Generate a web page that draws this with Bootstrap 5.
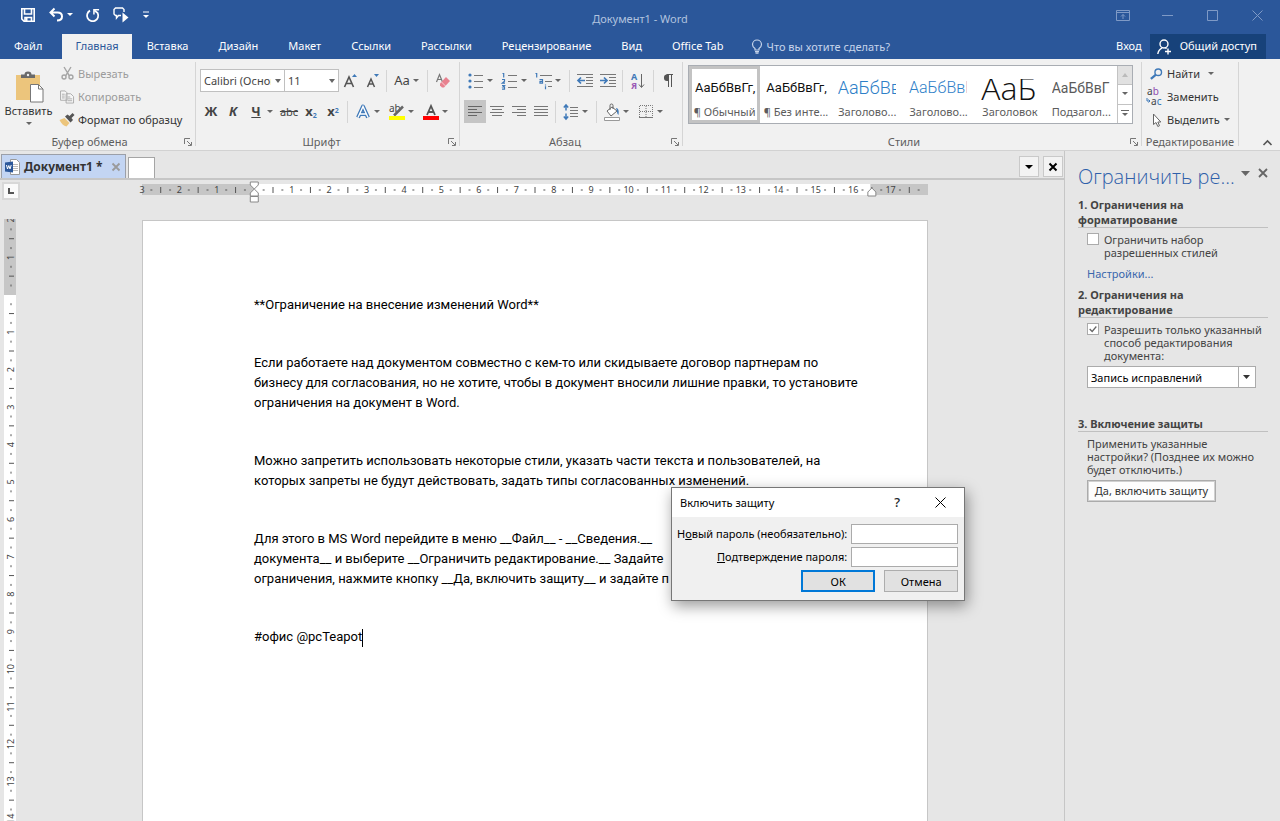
<!DOCTYPE html>
<html lang="ru">
<head>
<meta charset="utf-8">
<meta name="viewport" content="width=device-width, initial-scale=1">
<title>Документ1 - Word</title>
<link href="https://cdn.jsdelivr.net/npm/bootstrap@5.3.0/dist/css/bootstrap.min.css" rel="stylesheet">
<style>
  :root { --word: #2b579a; --ink: #444; --line: #c6c6c6; --accent: #3f79b8; }
  body { font: 11px/15px "Noto Sans", "Open Sans", sans-serif; color: var(--ink); background: #e6e6e6; }
  svg { display: block; flex: none; overflow: visible; }
  button, input, select, label, h1, h2, a { font: inherit; color: inherit; }
  select { appearance: none; outline: 0; cursor: default; }

  /* title bar and ribbon tabs */
  .app-head { background: var(--word); color: #fff; }
  .title-row { height: 34px; padding-left: 20px; }
  .title-row .btn { color: #fff; padding: 0; border: 0; }
  .quick { gap: 13px; }
  .doc-name { left: 0; right: 0; top: 11px; color: #b1c3df; pointer-events: none; }
  .title-row .win-btn { width: 45px; color: #7f9ac6; }
  .ribbon-tabs { height: 25px; --bs-nav-tabs-border-width: 0; }
  .ribbon-tabs .nav-link { color: #fff; padding: 0 15px; line-height: 24px; height: 25px; border: 0; border-radius: 0; font-size: 11px; }
  .ribbon-tabs .nav-link.active { background: #f1f1f1; color: var(--word); }
  .ribbon-tabs .file-tab { padding: 0 20px 0 14px; }
  .ribbon-tabs .home-tab { padding: 0 13px; margin-right: 0; }
  .ribbon-tabs .tell-me { color: #c6d4ea; padding-left: 12px; }
  .share { background: #17427a; color: #fff; border: 0; border-radius: 0; height: 25px; padding: 0 9px 0 7px; margin-right: 14px; font-size: 11px; }

  /* ribbon */
  .ribbon { background: #f1f1f1; border-bottom: 1px solid #d2d2d2; height: 92px; padding-top: 3px; }
  .group { height: 84px; border-right: 1px solid #d5d5d5; position: relative; flex: none; }
  .g-clip { width: 196px; } .g-font { width: 264px; padding-left: 4px; }
  .g-para { width: 223px; padding-left: 4px; } .g-edit { width: 97px; }
  .g-styles { flex: 1; min-width: 0; }
  .g-foot { margin: auto 0 -3px; height: 15px; line-height: 15px; color: #5e5e5e; }
  .g-foot svg { position: absolute; right: 3px; bottom: 0; }
  .tools { height: 23px; margin-top: 7px; }
  .tools + .tools { margin-top: 8px; }
  .rb { width: 22px; height: 23px; padding: 0; border: 0; border-radius: 0; color: var(--ink); display: flex; align-items: center; justify-content: center; font-size: 13px; line-height: 15px; }
  .rb.wide { width: 24px; }
  .rb.split { width: 34px; justify-content: start; padding-left: 2px; gap: 1px; }
  .rb.split > :first-child { width: 20px; text-align: center; }
  .rb.on { background: #c5c5c5; }
  .rb.strike { font-size: 11px; text-decoration: line-through; }
  .rb sub, .rb sup { color: var(--accent); font-size: 7px; }
  .vr-line { width: 1px; height: 22px; background: #d5d5d5; margin: 0 3px; flex: none; }
  .box-select { height: 23px; border: 1px solid #c0c0c0; border-radius: 0; background: #fff no-repeat right 3px center url("data:image/svg+xml,%3Csvg xmlns='http://www.w3.org/2000/svg' width='6' height='4'%3E%3Cpath d='M0 0h6L3 4z' fill='%23666'/%3E%3C/svg%3E"); padding: 0 13px 0 3px; }
  .f-name { width: 85px; } .f-size { width: 55px; margin-left: -1px; }
  .paste { width: 57px; padding: 4px 0 0; border: 0; font-size: 11px; line-height: 15px; color: #333; }
  .txt-btn { border: 0; padding: 0; height: 23px; font-size: 11px; line-height: 15px; color: #333; display: flex; align-items: center; gap: 4px; white-space: nowrap; }
  .txt-btn:disabled { color: #9c9c9c; border: 0; opacity: 1; }

  /* style gallery */
  .gallery { height: 59px; border: 1px solid #a9adb3; background: #fff; margin: 3px 8px 0 5px; }
  .style-item { flex: 1 1 0; min-width: 0; border: 0; border-radius: 0; padding: 5px 3px 0; color: #111; line-height: 15px; overflow: hidden; }
  .style-item.on { box-shadow: inset 0 0 0 3px #c3c3c3; }
  .style-item .sample { display: block; height: 26px; line-height: 24px; overflow: hidden; white-space: nowrap; text-align: left; margin: 0 0 0 3px; font-family: Roboto, "Noto Sans", sans-serif; font-size: 13px; }
  .style-item .cap { display: block; font-size: 11px; color: #5c5c5c; white-space: nowrap; margin-top: 2px; }
  .style-item .s18 { font-size: 18px; font-weight: 300; color: #2e80c8; margin-right: 4px; }
  .style-item .s16 { font-size: 16px; font-weight: 300; color: #2e80c8; margin-right: 4px; }
  .style-item .s32 { font-family: "Open Sans", sans-serif; font-size: 32px; font-weight: 300; height: 23px; line-height: 17px; margin: 3px 4px 0; }
  .style-item .sub { color: #5a5a5a; font-size: 14px; }
  .scroll-btn { flex: 1; width: 15px; border: 0; border-left: 1px solid #c3c3c3; background: #fff; padding: 0; display: flex; align-items: center; justify-content: center; }
  .scroll-btn + .scroll-btn { border-top: 1px solid #c3c3c3; }
  .scroll-btn:disabled { background: #e1e1e1; }

  /* document tabs */
  .doc-tabs { height: 29px; border-bottom: 2px solid #c6c6c6; padding: 0 1px; }
  .doc-tab { width: 125px; height: 24px; background: #c3d5f3; border: 1px solid #9b9fa8; border-bottom: 0; padding: 0 5px 0 3px; font-size: 12px; color: #333; }
  .new-tab { width: 27px; height: 21px; background: #fff; border: 1px solid #a5a5a5; border-bottom: 0; border-radius: 0; padding: 0; margin-left: 2px; }
  .strip-btn { width: 20px; height: 21px; background: #f3f3f3; border: 1px solid #c9c9c9; border-radius: 0; padding: 0; display: flex; align-items: center; justify-content: center; color: #000; }

  /* workspace */
  .side { width: 20px; }
  .tab-kind { width: 18px; height: 18px; background: #fafafa; border: 2px solid #d8d8d8; margin: 2px 0 0 2px; padding: 0; display: flex; align-items: center; justify-content: center; }
  .v-ruler { width: 12px; margin: 19px 0 0 4px; flex: 1; background: linear-gradient(#c6c6c6 76px, #fff 76px); overflow: hidden; }
  .canvas { padding-right: 14px; overflow: hidden; }
  .sheet-col { width: 100%; max-width: 786px; }
  .h-ruler { height: 11px; margin: 4px 0 25px; background: #fff; }
  .ruler-text { font-size: 9px; fill: #444; text-anchor: middle; }
  .sheet { background: #fff; border: 1px solid #c6c6c6; border-bottom: 0; padding: 74px 50px 0 111px; font: 13px/20px Roboto, "Noto Sans", sans-serif; color: #000; }
  .sheet p { margin: 0 0 38px; white-space: nowrap; }
  .caret { display: inline-block; width: 1px; height: 18px; background: #000; vertical-align: middle; }

  /* task pane */
  .pane { width: 216px; border-left: 1px solid #c6c6c6; padding: 13px 12px 0 13px; line-height: 13px; }
  .pane h1 { font-size: 20px; line-height: 26px; color: #2f60aa; margin: 0; font-family: "Open Sans", "Noto Sans", sans-serif; font-weight: 300; white-space: nowrap; }
  .pane h2 { font-weight: 700; line-height: 15px; border-bottom: 1px solid #c0c0c0; margin: 7px 0 5px; }
  .pane .inner { padding-left: 9px; }
  .pane .pane-link { color: #3a67ad; }
  .pane .check-row { display: flex; gap: 5px; }
  .pane .form-check-input { width: 12px; height: 12px; margin: 0; border: 1px solid #ababab; border-radius: 0; background-color: #fff; flex: none; opacity: 1; }
  .pane .form-check-input:checked { background-image: url("data:image/svg+xml,%3Csvg xmlns='http://www.w3.org/2000/svg' viewBox='0 0 12 12'%3E%3Cpath d='M2 6l3 3 5-6' fill='none' stroke='%23666' stroke-width='1.5'/%3E%3C/svg%3E"); }
  .mode-select { width: 169px; height: 22px; border: 1px solid #ababab; border-radius: 0; padding: 0 18px 0 3px; color: #000; background: #fff no-repeat right center url("data:image/svg+xml,%3Csvg xmlns='http://www.w3.org/2000/svg' width='17' height='20'%3E%3Cpath d='M.5 0v20' stroke='%23ababab'/%3E%3Cpath d='M5 8h7l-3.500 4z' fill='%23333'/%3E%3C/svg%3E"); }
  .apply { width: 129px; height: 22px; background: #fdfdfd; border: 1px solid #ababab; box-shadow: inset 0 0 0 1px #d0d0d0; border-radius: 0; padding: 0; font-size: 11px; color: #333; }

  /* dialog */
  .dlg { left: 671px; top: 487px; width: 294px; border: 1px solid #777; background: #f0f0f0; color: #000; box-shadow: 2px 5px 14px rgba(0,0,0,.4); }
  .dlg-head { height: 29px; background: #fff; padding: 0 18px 0 8px; }
  .dlg-head .help { font-size: 13px; line-height: 15px; font-weight: 500; margin-right: 35px; }
  .dlg-body { padding: 7px 7px 8px 5px; display: grid; grid-template-columns: 1fr 107px; gap: 3px 4px; }
  .dlg-body label { text-align: right; line-height: 20px; white-space: nowrap; }
  .dlg-acts { grid-column: 1 / -1; gap: 9px; }
  .dlg .form-control { height: 20px; border: 1px solid #ababab; border-radius: 0; padding: 0 3px; }
  .dlg .dlg-btn { width: 74px; height: 22px; border: 1px solid #adadad; border-radius: 0; background: #e1e1e1; padding: 0; font-size: 11px; line-height: 15px; color: #000; }
  .dlg .dlg-btn.main { border: 2px solid #0078d7; }
</style>
</head>
<body class="vh-100 d-flex flex-column overflow-hidden position-relative">

<header class="app-head flex-shrink-0">
  <div class="title-row d-flex position-relative">
    <div class="quick d-flex align-items-center pb-1">
      <button class="btn" aria-label="Сохранить"><svg width="16" height="16" viewBox="0 0 16 16" fill="none" stroke="#fff" stroke-width="1.600"><path d="M1.800 1.800h12.400v12.400H4L1.800 12z"/><path d="M4.500 2v5h7V2M5 14v-3.500h6.500V14"/><path d="M6.500 11v3" stroke-width="2"/></svg></button>
      <button class="btn d-flex align-items-center gap-1" aria-label="Отменить"><svg width="14" height="16" viewBox="0 0 14 16" fill="none" stroke="#fff" stroke-width="2"><path d="M5.500 1.500 1.500 5.500l4 4M2 5.500h6.500c3 0 4.500 1.500 4.500 4s-2 4-5 4"/></svg><svg width="6" height="4"><path d="M0 0h6L3 3z" fill="#fff"/></svg></button>
      <button class="btn" aria-label="Повторить"><svg width="14" height="15" viewBox="0 0 15 16" fill="none" stroke="#fff" stroke-width="1.900"><path d="M4.300 2.800A6 6 0 1 0 12.500 5.500L9 2.500"/><path d="M8.500 7V1.800H14" stroke-width="1.600"/></svg></button>
      <button class="btn" aria-label="Прочитать вслух"><svg width="16" height="16" viewBox="0 0 16 16"><path d="M8 8.500H5.500L3.500 11V8.500H2.500L1 7V2.500L2.500 1h7L11 2.500V5" fill="none" stroke="#fff" stroke-width="1.400"/><path d="M9.500 5.500v10l6-5z" fill="#fff"/></svg></button>
      <button class="btn" aria-label="Настройка панели"><svg width="8" height="8"><path d="M1 1h6" stroke="#fff"/><path d="M1 4h6L4 7z" fill="#fff"/></svg></button>
    </div>
    <div class="doc-name position-absolute text-center">Документ1 - Word</div>
    <div class="ms-auto d-flex align-items-center pb-1">
      <button class="btn win-btn" aria-label="Параметры ленты"><svg class="mx-auto" width="14" height="11" viewBox="0 0 14 11" fill="none" stroke="currentColor"><path d="M.5.5h13v10H.5zM.5 2.500h13M7 9V4.500M5 6.500l2-2 2 2"/></svg></button>
      <button class="btn win-btn" aria-label="Свернуть"><svg class="mx-auto" width="11" height="11"><path d="M0 5.500h11" stroke="currentColor"/></svg></button>
      <button class="btn win-btn" aria-label="Развернуть"><svg class="mx-auto" width="11" height="11"><path d="M.5.5h10v10H.5z" fill="none" stroke="currentColor"/></svg></button>
      <button class="btn win-btn" aria-label="Закрыть"><svg class="mx-auto" width="11" height="11"><path d="M.5.5l10 10M10.500.5l-10 10" stroke="currentColor"/></svg></button>
    </div>
  </div>
  <div class="d-flex">
    <nav class="nav nav-tabs ribbon-tabs flex-nowrap border-0">
      <a class="nav-link file-tab" href="#">Файл</a>
      <a class="nav-link home-tab active" href="#">Главная</a>
      <a class="nav-link" href="#">Вставка</a>
      <a class="nav-link" href="#">Дизайн</a>
      <a class="nav-link" href="#">Макет</a>
      <a class="nav-link" href="#">Ссылки</a>
      <a class="nav-link" href="#">Рассылки</a>
      <a class="nav-link" href="#">Рецензирование</a>
      <a class="nav-link" href="#">Вид</a>
      <a class="nav-link" href="#">Office Tab</a>
      <a class="nav-link tell-me d-flex align-items-center gap-1" href="#"><svg width="12" height="15" viewBox="0 0 12 15" fill="none" stroke="currentColor" stroke-width="1.200"><path d="M4 11V9.500C2.500 8.500 1.500 7.300 1.500 5.500a4.500 4.500 0 0 1 9 0c0 1.800-1 3-2.500 4V11zM4 12.600h4M4.500 14.200h3"/></svg>Что вы хотите сделать?</a>
    </nav>
    <div class="ms-auto d-flex ribbon-tabs">
      <a class="nav-link px-2" href="#">Вход</a>
      <button class="btn share d-flex align-items-center gap-1"><svg class="me-1" width="15" height="16" viewBox="0 0 15 16" fill="none" stroke="#fff" stroke-width="1.400"><circle cx="7" cy="5" r="4"/><path d="M.8 15c.4-3 2-5 4.400-6.200M8.500 9l1 .8M11 9.500v6M8 12.500h6"/></svg>Общий доступ</button>
    </div>
  </div>
</header>

<section class="ribbon d-flex flex-shrink-0" aria-label="Лента">
  <div class="group g-clip d-flex flex-column">
    <div class="d-flex">
      <button class="btn paste"><svg class="mx-auto" width="30" height="31" viewBox="0 0 30 31"><path d="M2 3h24v25H2z" fill="#ecc57c"/><path d="M7 6V2.500h3.500a3.500 3 0 0 1 7 0H21V6z" fill="#6a6a6a"/><circle cx="14" cy="3" r="1.200" fill="#f1f1f1"/><path d="M16.500 12.500h8l4.500 4.500v13H16.500z" fill="#fff" stroke="#777"/><path d="M24.500 12.500V17H29" fill="none" stroke="#777"/></svg>Вставить<svg class="mx-auto mt-1" width="6" height="4"><path d="M0 0h6L3 3z" fill="#666"/></svg></button>
      <div class="d-flex flex-column">
        <button class="btn txt-btn ms-1" disabled><svg width="13" height="15" viewBox="0 0 15 15" fill="none" stroke="#a5a5a5" stroke-width="1.600"><path d="M3.500 0l6 10M11.500 0l-6 10"/><circle cx="3.500" cy="11.500" r="2.300"/><circle cx="11.500" cy="11.500" r="2.300"/></svg>Вырезать</button>
        <button class="btn txt-btn" disabled><svg class="ms-1" width="13" height="14" viewBox="1 0 14 14" fill="#f6f6f6" stroke="#aaa"><path d="M.5.5h5l2 2v8h-7zM6.500 3.500h5l3 3v7h-8z"/><path d="M2 4h3M2 6h3M2 8h3M8 7h3M8 9h5M8 11h5"/></svg>Копировать</button>
        <button class="btn txt-btn"><svg class="ms-1" width="13" height="14" viewBox="2 0 12 14"><path d="M5 5l5 5-3 3.500C4 12.500 2 11 0 7z" fill="#ecc57c"/><path d="M5.500 3.500L8 1.500l2 1.500 3-3 2 2-3 3 1.500 2L11 9.500z" fill="#555"/></svg>Формат по образцу</button>
      </div>
    </div>
    <div class="g-foot text-center pe-3">Буфер обмена<svg width="8" height="8" viewBox="0 0 8 8" fill="none" stroke="#777"><path d="M.5 6V.5H6M3 3l4 4M7.500 4v3.500H4"/></svg></div>
  </div>

  <div class="group g-font d-flex flex-column">
    <div class="tools d-flex align-items-center">
      <select class="box-select f-name" aria-label="Шрифт"><option>Calibri (Основной текст)</option></select>
      <select class="box-select f-size" aria-label="Размер"><option>11</option></select>
      <button class="btn rb" aria-label="Увеличить размер"><svg width="15" height="16" viewBox="0 0 15 16"><path d="M1.500 14L6 4l4.500 10M3.200 10.500h5.600" fill="none" stroke="#555" stroke-width="1.600"/><path d="M9 4h5l-2.500-3z" fill="#3f79b8"/></svg></button>
      <button class="btn rb" aria-label="Уменьшить размер"><svg width="15" height="16" viewBox="0 0 15 16"><path d="M2.500 14L6 6l3.500 8M3.700 11h4.600" fill="none" stroke="#555" stroke-width="1.500"/><path d="M9 1h5l-2.500 3z" fill="#3f79b8"/></svg></button>
      <span class="vr-line"></span>
      <button class="btn rb split" aria-label="Регистр"><span>Aa</span><svg width="6" height="4"><path d="M0 0h6L3 3z" fill="#666"/></svg></button>
      <span class="vr-line"></span>
      <button class="btn rb wide" aria-label="Очистить формат"><svg width="16" height="16" viewBox="0 0 16 16"><path d="M1.500 9L4.500 1.500 7.500 9M2.500 6.500h4" fill="none" stroke="#777" stroke-width="1.200"/><path d="M5 10.500L11 4l4 4-6 6.500H7l-2-2z" fill="#e8818f"/><path d="M6.500 9l4 4" stroke="#f6d0d5"/></svg></button>
    </div>
    <div class="tools d-flex align-items-center">
      <button class="btn rb fw-bold">Ж</button>
      <button class="btn rb fw-bold fst-italic">К</button>
      <button class="btn rb split"><span class="fw-bold text-decoration-underline">Ч</span><svg width="6" height="4"><path d="M0 0h6L3 3z" fill="#666"/></svg></button>
      <button class="btn rb strike">abc</button>
      <button class="btn rb fw-bold" aria-label="Подстрочный"><span>x<sub>2</sub></span></button>
      <button class="btn rb fw-bold" aria-label="Надстрочный"><span>x<sup>2</sup></span></button>
      <span class="vr-line"></span>
      <button class="btn rb split" aria-label="Эффекты"><svg width="20" height="16" viewBox="0 0 20 16"><path d="M5 13.500L10 2.500l5 11M6.500 10h7" fill="none" stroke="#3f79b8" stroke-width="4" stroke-linejoin="round"/><path d="M5 13.500L10 2.500l5 11M6.500 10h7" fill="none" stroke="#fff" stroke-width="1.400"/></svg><svg width="6" height="4"><path d="M0 0h6L3 3z" fill="#666"/></svg></button>
      <button class="btn rb split" aria-label="Цвет выделения"><svg width="20" height="18" viewBox="0 0 20 18"><text x="2" y="9" font-size="10" fill="#444">ab</text><path d="M7 12.500l9-9" stroke="#666" stroke-width="2.500"/><path d="M2 13h16v4H2z" fill="#ff0"/></svg><svg width="6" height="4"><path d="M0 0h6L3 3z" fill="#666"/></svg></button>
      <button class="btn rb split" aria-label="Цвет текста"><svg width="20" height="18" viewBox="0 0 20 18"><path d="M6 12L10 3l4 9M7.500 9h5" fill="none" stroke="#555" stroke-width="1.800"/><path d="M2 13h16v4H2z" fill="#f00"/></svg><svg width="6" height="4"><path d="M0 0h6L3 3z" fill="#666"/></svg></button>
    </div>
    <div class="g-foot text-center pe-3">Шрифт<svg width="8" height="8" viewBox="0 0 8 8" fill="none" stroke="#777"><path d="M.5 6V.5H6M3 3l4 4M7.500 4v3.500H4"/></svg></div>
  </div>

  <div class="group g-para d-flex flex-column">
    <div class="tools d-flex align-items-center">
      <button class="btn rb split" aria-label="Маркеры"><svg width="20" height="16" viewBox="0 0 20 16"><g fill="#3f79b8"><circle cx="4" cy="2" r="1.600"/><circle cx="4" cy="8" r="1.600"/><circle cx="4" cy="14" r="1.600"/></g><path d="M8 2.500h9M8 8.500h9M8 14.500h9" stroke="#777"/></svg><svg width="6" height="4"><path d="M0 0h6L3 3z" fill="#666"/></svg></button>
      <button class="btn rb split" aria-label="Нумерация"><svg width="20" height="18" viewBox="0 0 20 18"><g fill="none" stroke="#3f79b8" stroke-width="1.200"><path d="M2.500 1.500h1.200V5.500M2 7.500h2.500v1.800L2.300 11.200H5M2 13.500h2.500L3 15h1.500v2.200H2"/></g><path d="M8 3.500h9M8 9.500h9M8 15.500h9" stroke="#777"/></svg><svg width="6" height="4"><path d="M0 0h6L3 3z" fill="#666"/></svg></button>
      <button class="btn rb split" aria-label="Многоуровневый список"><svg width="20" height="18" viewBox="0 0 20 18"><g fill="none" stroke="#3f79b8" stroke-width="1.200"><path d="M1.500 1.500h1.200V5.500M5.500 7.500h3V11.200h-2.500V9.300h2.500M11.500 12.500v1M11.500 14.300v3"/></g><path d="M6 3.500h12M11 9.500h7M14 14.500h4" stroke="#777"/></svg><svg width="6" height="4"><path d="M0 0h6L3 3z" fill="#666"/></svg></button>
      <span class="vr-line"></span>
      <button class="btn rb wide" aria-label="Уменьшить отступ"><svg width="16" height="14" viewBox="0 0 16 14"><path d="M0 .5h16M9 3.500h7M9 6.500h7M9 9.500h7M0 12.500h16" stroke="#777"/><path d="M8 6.500H1.500M4 3.500l-3 3 3 3" fill="none" stroke="#3f79b8" stroke-width="1.700"/></svg></button>
      <button class="btn rb" aria-label="Увеличить отступ"><svg width="16" height="14" viewBox="0 0 16 14"><path d="M0 .5h16M9 3.500h7M9 6.500h7M9 9.500h7M0 12.500h16" stroke="#777"/><path d="M0 6.500h6.500M4 3.500l3 3-3 3" fill="none" stroke="#3f79b8" stroke-width="1.700"/></svg></button>
      <span class="vr-line"></span>
      <button class="btn rb wide" aria-label="Сортировка"><svg width="14" height="18" viewBox="0 0 14 18"><text x="0" y="8" font-size="9" font-weight="700" fill="#3f79b8">А</text><text x="0" y="17" font-size="9" font-weight="700" fill="#9b59b6">Я</text><path d="M10.500 2v13M8 12.500l2.500 3 2.500-3" fill="none" stroke="#666"/></svg></button>
      <span class="vr-line"></span>
      <button class="btn rb" aria-label="Знаки абзаца"><svg width="10" height="13" viewBox="0 0 10 13"><path d="M5 .5H4a3 3.200 0 0 0 0 6.500h1z" fill="#555"/><path d="M3.500.5H10M5.500.5V13M8.500.5V13" stroke="#555"/></svg></button>
    </div>
    <div class="tools d-flex align-items-center">
      <button class="btn rb on" aria-label="По левому краю"><svg width="14" height="11"><path d="M0 .5h14M0 3.500h9M0 6.500h14M0 9.500h9" stroke="#666"/></svg></button>
      <button class="btn rb" aria-label="По центру"><svg width="14" height="11"><path d="M0 .5h14M2 3.500h10M0 6.500h14M2 9.500h10" stroke="#777"/></svg></button>
      <button class="btn rb" aria-label="По правому краю"><svg width="14" height="11"><path d="M0 .5h14M5 3.500h9M0 6.500h14M5 9.500h9" stroke="#777"/></svg></button>
      <button class="btn rb" aria-label="По ширине"><svg width="14" height="11"><path d="M0 .5h14M0 3.500h14M0 6.500h14M0 9.500h14" stroke="#777"/></svg></button>
      <span class="vr-line"></span>
      <button class="btn rb split" aria-label="Интервал"><svg width="20" height="16" viewBox="0 0 20 16"><path d="M5 1.500v5M2.800 3.500L5 1l2.200 2.500M5 9.500v5M2.800 12.500L5 15l2.200-2.500" fill="none" stroke="#3f79b8" stroke-width="1.500"/><path d="M9 3.500h8M9 6.500h8M9 9.500h8M9 12.500h8" stroke="#777"/></svg><svg width="6" height="4"><path d="M0 0h6L3 3z" fill="#666"/></svg></button>
      <span class="vr-line"></span>
      <button class="btn rb split" aria-label="Заливка"><svg width="20" height="18" viewBox="0 0 20 18"><path d="M5 8l5-4 5 4-6 5z" fill="#fff" stroke="#666"/><path d="M8 7V2.500a1.500 1.500 0 0 1 3 0V6" fill="none" stroke="#666"/><path d="M14 5c3 0 3 4 2.500 7-1.500-1-1.500-3-1.500-4z" fill="#3f79b8"/><path d="M2.500 14.500h15v3h-15z" fill="#fff" stroke="#999"/></svg><svg width="6" height="4"><path d="M0 0h6L3 3z" fill="#666"/></svg></button>
      <button class="btn rb split" aria-label="Границы"><svg width="20" height="14" viewBox="0 0 20 14" fill="none" stroke="#777"><path d="M3.500 12V.5h13V12M10 1v11M4 6.500h12" stroke-dasharray="1 1"/><path d="M3 12.500h14"/></svg><svg width="6" height="4"><path d="M0 0h6L3 3z" fill="#666"/></svg></button>
    </div>
    <div class="g-foot text-center pe-3">Абзац<svg width="8" height="8" viewBox="0 0 8 8" fill="none" stroke="#777"><path d="M.5 6V.5H6M3 3l4 4M7.500 4v3.500H4"/></svg></div>
  </div>

  <div class="group g-styles d-flex flex-column">
    <div class="gallery d-flex">
      <button class="btn style-item on"><span class="sample">АаБбВвГг,</span><span class="cap">¶ Обычный</span></button>
      <button class="btn style-item"><span class="sample">АаБбВвГг,</span><span class="cap">¶ Без инте...</span></button>
      <button class="btn style-item"><span class="sample s18">АаБбВв</span><span class="cap">Заголово...</span></button>
      <button class="btn style-item"><span class="sample s16">АаБбВвГ</span><span class="cap">Заголово...</span></button>
      <button class="btn style-item"><span class="sample s32">АаБ</span><span class="cap">Заголовок</span></button>
      <button class="btn style-item"><span class="sample sub">АаБбВвГ</span><span class="cap">Подзагол...</span></button>
      <div class="d-flex flex-column">
        <button class="scroll-btn" disabled aria-label="Вверх"><svg width="6" height="4"><path d="M0 4h6L3 0z" fill="#bbb"/></svg></button>
        <button class="scroll-btn" aria-label="Вниз"><svg width="6" height="4"><path d="M0 0h6L3 3z" fill="#666"/></svg></button>
        <button class="scroll-btn" aria-label="Все стили"><svg width="8" height="7"><path d="M0 .5h8" stroke="#666"/><path d="M1 3h6L4 6z" fill="#666"/></svg></button>
      </div>
    </div>
    <div class="g-foot text-center pe-3">Стили<svg width="8" height="8" viewBox="0 0 8 8" fill="none" stroke="#777"><path d="M.5 6V.5H6M3 3l4 4M7.500 4v3.500H4"/></svg></div>
  </div>

  <div class="group g-edit d-flex flex-column">
    <div class="ps-1">
      <button class="btn txt-btn ms-1"><svg width="13" height="14" viewBox="0 0 15 14" fill="none" stroke="#3f79b8"><circle cx="9.500" cy="5" r="3.800" stroke-width="1.600"/><path d="M6.500 8L1 12.500" stroke-width="2.600"/></svg>Найти<svg class="ms-1" width="6" height="4"><path d="M0 0h6L3 3z" fill="#666"/></svg></button>
      <button class="btn txt-btn"><svg width="17" height="18" viewBox="0 0 17 18" font-size="10"><text x="1" y="7" fill="#444">a<tspan fill="#8e4bb0">b</tspan></text><text x="5" y="17" fill="#444">a<tspan fill="#2e74b5">c</tspan></text><path d="M1 10v3h3M2.500 11.500L4 13l-1.500 1.500" fill="none" stroke="#3f79b8"/></svg>Заменить</button>
      <button class="btn txt-btn ms-1"><svg width="13" height="14" viewBox="1 0 13 14"><path d="M4.500 1v10.500l2.500-2 1.800 4 1.700-.8-1.700-3.700h3z" fill="#fff" stroke="#666"/></svg>Выделить<svg width="6" height="4"><path d="M0 0h6L3 3z" fill="#666"/></svg></button>
    </div>
    <div class="g-foot text-center">Редактирование</div>
  </div>
  <button class="btn border-0 p-0 align-self-end mb-1 ms-4 me-2" aria-label="Свернуть ленту"><svg width="9" height="6"><path d="M.5 5l4-4 4 4" fill="none" stroke="#555" stroke-width="1.600"/></svg></button>
</section>

<div class="flex-grow-1 d-flex overflow-hidden">
  <main class="flex-grow-1 d-flex flex-column overflow-hidden">
    <div class="doc-tabs d-flex align-items-end flex-shrink-0">
      <div class="doc-tab d-flex align-items-center fw-bold"><svg class="me-1" width="15" height="16" viewBox="0 0 15 16"><path d="M5.500.5h6l3 3v12h-9z" fill="#fff" stroke="#999"/><path d="M8 5.500h5M8 7.500h5M8 9.500h5M8 11.500h5" stroke="#bbb"/><path d="M0 3.500l8-1v11l-8-1z" fill="#2b579a"/><path d="M1.500 6l1 4 1.300-3.500L5 10l1.200-4" fill="none" stroke="#fff"/></svg><span>Документ1 *</span><button class="btn border-0 p-0 ms-auto" aria-label="Закрыть вкладку"><svg width="8" height="8"><path d="M.5.5l7 7M7.500.5l-7 7" stroke="#9a9a9a" stroke-width="1.800"/></svg></button></div>
      <button class="btn new-tab" aria-label="Новая вкладка"></button>
      <div class="ms-auto d-flex align-self-center gap-1 pt-1">
        <button class="btn strip-btn" aria-label="Список вкладок"><svg width="8" height="4"><path d="M0 0h8L4 4z"/></svg></button>
        <button class="btn strip-btn" aria-label="Закрыть"><svg width="8" height="8"><path d="M.5.5l7 7M7.500.5l-7 7" stroke="#000" stroke-width="2"/></svg></button>
      </div>
    </div>
    <div class="flex-grow-1 d-flex overflow-hidden">
      <div class="side d-flex flex-column">
        <button class="tab-kind" aria-label="Тип табуляции"><svg width="6" height="6"><path d="M1 0v5h5" fill="none" stroke="#555" stroke-width="2"/></svg></button>
        <div class="v-ruler"><svg id="vr" width="12" height="1200"></svg></div>
      </div>
      <div class="canvas flex-grow-1 d-flex justify-content-center">
        <div class="sheet-col d-flex flex-column">
          <div class="h-ruler"><svg id="hr" class="overflow-visible" width="100%" height="11"></svg></div>
          <article class="sheet flex-grow-1">
            <p>**Ограничение на внесение изменений Word**</p>
            <p>Если работаете над документом совместно с кем-то или скидываете договор партнерам по<br>бизнесу для согласования, но не хотите, чтобы в документ вносили лишние правки, то установите<br>ограничения на документ в Word.</p>
            <p>Можно запретить использовать некоторые стили, указать части текста и пользователей, на<br>которых запреты не будут действовать, задать типы согласованных изменений.</p>
            <p>Для этого в MS Word перейдите в меню __Файл__ - __Сведения.__<br>документа__ и выберите __Ограничить редактирование.__ Задайте<br>ограничения, нажмите кнопку __Да, включить защиту__ и задайте п</p>
            <p>#офис @pcTeapot<span class="caret"></span></p>
          </article>
        </div>
      </div>
    </div>
  </main>

  <aside class="pane flex-shrink-0">
    <div class="d-flex align-items-start justify-content-between">
      <h1>Ограничить ре...</h1>
      <div class="d-flex gap-2 mt-1">
        <button class="btn border-0 p-0" aria-label="Меню области"><svg width="9" height="5"><path d="M0 0h9L4.500 5z" fill="#666"/></svg></button>
        <button class="btn border-0 p-0" aria-label="Закрыть область"><svg width="10" height="10"><path d="M1 1l8 8M9 1l-8 8" stroke="#666" stroke-width="1.800"/></svg></button>
      </div>
    </div>
    <h2>1. Ограничения на<br>форматирование</h2>
    <div class="inner">
      <div class="check-row"><input class="form-check-input" type="checkbox" id="c1"><label for="c1">Ограничить набор<br>разрешенных стилей</label></div>
      <a class="pane-link d-block text-decoration-none mt-2" href="#">Настройки...</a>
    </div>
    <h2>2. Ограничения на<br>редактирование</h2>
    <div class="inner">
      <div class="check-row"><input class="form-check-input" type="checkbox" id="c2" checked><label for="c2">Разрешить только указанный<br>способ редактирования<br>документа:</label></div>
      <select class="mode-select mt-1" aria-label="Способ редактирования"><option>Запись исправлений</option></select>
    </div>
    <h2 class="mt-4 pt-1">3. Включение защиты</h2>
    <div class="inner">
      <div>Применить указанные<br>настройки? (Позднее их можно<br>будет отключить.)</div>
      <button class="btn apply mt-1">Да, включить защиту</button>
    </div>
  </aside>
</div>

<form class="dlg position-absolute" role="dialog" aria-labelledby="dt">
  <div class="dlg-head d-flex align-items-center">
    <span id="dt" class="me-auto">Включить защиту</span>
    <button type="button" class="btn border-0 p-0 help" aria-label="Справка">?</button>
    <button type="button" class="btn border-0 p-0" aria-label="Закрыть"><svg width="11" height="11"><path d="M.5.5l10 10M10.500.5l-10 10" stroke="#000"/></svg></button>
  </div>
  <div class="dlg-body">
    <label for="p1">Н<u>о</u>вый пароль (необязательно):</label><input class="form-control" type="password" id="p1">
    <label for="p2"><u>П</u>одтверждение пароля:</label><input class="form-control" type="password" id="p2">
    <div class="dlg-acts d-flex justify-content-end"><button type="button" class="btn dlg-btn main">ОК</button><button type="button" class="btn dlg-btn">Отмена</button></div>
  </div>
</form>

<script src="https://cdn.jsdelivr.net/npm/bootstrap@5.3.0/dist/js/bootstrap.bundle.min.js"></script>
<script>
  // Both rulers share one scale: the sheet is 21 cm wide.
  const hr = document.getElementById('hr'), vr = document.getElementById('vr');
  function scale() {
    const w = hr.getBoundingClientRect().width, u = w / 21;
    let h = `<path d="M0 0h${3 * u}v11H0zM${19.46 * u} 0H${w}v11H${19.46 * u}z" fill="#c6c6c6"/>`;
    for (let i = 0; i < 21; i++) {
      const x = i * u, n = Math.abs(i - 3);
      if (n) h += `<text class="ruler-text" x="${x}" y="9">${n}</text>`;
      h += `<path d="M${x + u / 4 - 1} 6h2M${x + u * .75 - 1} 6h2M${x + u / 2} 3v6" stroke="#555"/>`;
    }
    const z = 3 * u;
    h += `<path d="M${z - 4} -2h8v3l-4 4-4-4zM${z - 4} 12V9l4-4 4 4v3zM${z - 4} 12.500h8v5.500h-8z" fill="#fff" stroke="#888"/>`;
    const r = 19.5 * u;
    h += `<path d="M${r - 4} 12V8l4-4 4 4v4z" fill="#fff" stroke="#888"/>`;
    hr.innerHTML = h;
    let v = '';
    for (let i = 0; i < 30; i++) {
      const y = 1 + i * u, n = Math.abs(i - 2);
      if (n) v += `<text class="ruler-text" transform="translate(10 ${y}) rotate(-90)">${n}</text>`;
      v += `<path d="M7 ${y + u / 4 - 1}v2M7 ${y + u * .75 - 1}v2M5 ${y + u / 2}h5" stroke="#555"/>`;
    }
    vr.innerHTML = v;
  }
  scale();
  addEventListener('resize', scale);
</script>
</body>
</html>
